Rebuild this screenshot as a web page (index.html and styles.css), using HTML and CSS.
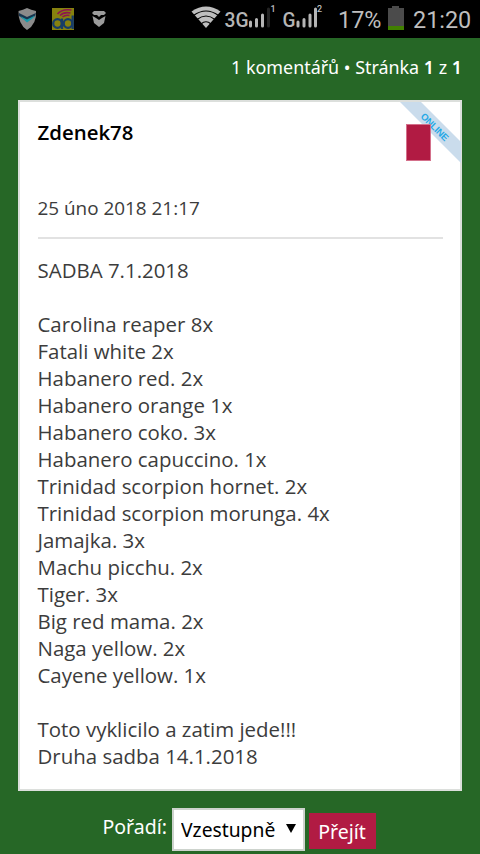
FILE: index.html
```
<!DOCTYPE html>
<html lang="cs">
<head>
  <meta charset="UTF-8">
  <meta name="viewport" content="width=device-width, initial-scale=1.0">
  <title>SADBA 7.1.2018</title>
  <link rel="stylesheet" href="styles.css">
</head>
<body>
  <div class="status-bar">
    <svg class="status-icons" width="330" height="38" viewBox="0 0 330 38">
      <!-- shield -->
      <path d="M18.500 11 Q23 10 27 8 Q31 10 36 11 Q37 24 27 30 Q18 24 18.500 11z" fill="#8b8b8b"/>
      <path d="M19 13 L27 17 L36 13 L35 16 L27 21 L19 16z" fill="#17344e"/>
      <path d="M20 16 L27 19.500 L35 15.500 L33 18 L27 22.500 L22 18z" fill="#169baa"/>
      <!-- ad -->
      <rect x="52" y="8" width="22" height="22" fill="#86810f"/>
      <g fill="none" stroke="#8d164e" stroke-width="1.600">
        <path d="M57.500 14 Q62 8.500 71.500 10"/>
        <path d="M60 15.500 Q64 11.500 70.500 13"/>
        <path d="M62.500 17 Q65.500 14.500 69.500 15.500"/>
      </g>
      <g fill="none" stroke="#173c68" stroke-width="2.300">
        <circle cx="57.500" cy="23.500" r="4.300"/>
        <path d="M62 18.500v10.500"/>
        <circle cx="68" cy="23.500" r="4.300"/>
        <path d="M72.700 15.500v13.500"/>
      </g>
      <!-- mask -->
      <path d="M92 13 L94 11 L104 11 L106 13 L104 15 L101 15 L99 17 L97 15 L94 15z" fill="#9b9b9b"/>
      <path d="M92.500 16 L96 18 L99 20 L102 18 L105.500 16 L104 23 L99 27 L94 23z" fill="#9b9b9b"/>
      <!-- wifi -->
      <path d="M206 28 L191.500 11.500 Q206 1.500 220.500 11.500z" fill="#bebebe"/>
      <g fill="none" stroke="#000" stroke-width="1.100">
        <path d="M193.500 15.500 Q206 6.500 218.500 15.500"/>
        <path d="M197 19.500 Q206 12.500 215 19.500"/>
        <path d="M201 24 Q206 19.500 211 24"/>
      </g>
      <!-- signal 1 -->
      <text class="net-text" x="224.500" y="27" textLength="24" lengthAdjust="spacingAndGlyphs">3G</text>
      <g stroke="#b5b5b5" stroke-width="3" stroke-linecap="round">
        <path d="M250.500 22v4M256.500 19.500v6.500M262.500 15v11"/>
        <path d="M268.500 9v17" stroke="#242424"/>
      </g>
      <text class="sim-text" x="270.500" y="12">1</text>
      <!-- signal 2 -->
      <text class="net-text" x="282.500" y="27" textLength="13" lengthAdjust="spacingAndGlyphs">G</text>
      <g stroke="#b5b5b5" stroke-width="3" stroke-linecap="round">
        <path d="M298 22v4M304 19.500v6.500M310 15v11M315.500 9v17"/>
      </g>
      <text class="sim-text" x="317" y="12">2</text>
    </svg>
    <span class="percent">17%</span>
    <svg class="battery" width="16" height="24" viewBox="0 0 16 24">
      <path d="M0 2h4V0h7v2h5v22H0z" fill="#4b4b4b"/>
      <path d="M0 20h16v4H0z" fill="#418000"/>
    </svg>
    <span class="clock">21:20</span>
  </div>

  <div class="pagination">1 komentářů • Stránka <strong>1</strong> z <strong>1</strong></div>

  <div class="post">
    <svg class="online" width="61" height="61" viewBox="0 0 61 61">
      <path d="M0 0h21l40 40v21z" fill="#cadcec"/>
      <text transform="translate(20 15) rotate(45)" textLength="35">ONLINE</text>
    </svg>
    <div class="flag"></div>
    <h3 class="author">Zdenek78</h3>
    <p class="date">25 úno 2018 21:17</p>
    <div class="content">
      SADBA 7.1.2018<br>
      <br>
      Carolina reaper 8x<br>
      Fatali white 2x<br>
      Habanero red. 2x<br>
      Habanero orange 1x<br>
      Habanero coko. 3x<br>
      Habanero capuccino. 1x<br>
      Trinidad scorpion hornet. 2x<br>
      Trinidad scorpion morunga. 4x<br>
      Jamajka. 3x<br>
      Machu picchu. 2x<br>
      Tiger. 3x<br>
      Big red mama. 2x<br>
      Naga yellow. 2x<br>
      Cayene yellow. 1x<br>
      <br>
      Toto vyklicilo a zatim jede!!!<br>
      Druha sadba 14.1.2018
    </div>
  </div>

  <form class="sort">
    <label for="order">Pořadí:</label>
    <div class="select-wrap">
      <select id="order">
        <option>Vzestupně</option>
        <option>Sestupně</option>
      </select>
      <svg class="arrow" width="10" height="9" viewBox="0 0 10 9"><path d="M0 0h10L5 9z"/></svg>
    </div>
    <button type="button">Přejít</button>
  </form>
</body>
</html>
```
FILE: styles.css
```
* {
  box-sizing: border-box;
}
body {
  margin: 0;
  height: 854px;
  overflow: hidden;
  background-color: #266726;
  color: #fff;
  font-family: "Open Sans", "Noto Sans", sans-serif;
}
.status-bar {
  display: flex;
  height: 38px;
  background-color: #000;
  color: #bebebe;
  font-family: Roboto, sans-serif;
  font-size: 23.4px;
  line-height: 40px;
}
.status-icons {
  flex: none;
}
.net-text {
  font: 500 21px Roboto, sans-serif;
  fill: #b5b5b5;
}
.sim-text {
  font: 500 9px Roboto, sans-serif;
  fill: #bebebe;
}
.percent {
  width: 58px;
  padding-left: 8px;
}
.battery {
  flex: none;
  margin-top: 6px;
}
.clock {
  margin-left: 9px;
}
.pagination {
  height: 62px;
  padding: 16px 18px 0 0;
  font-family: "Noto Sans", sans-serif;
  font-size: 17.9px;
  line-height: 27px;
  text-align: right;
}
.pagination strong {
  font-weight: 600;
}
.post {
  position: relative;
  height: 691px;
  margin: 0 18px;
  padding: 17px 17.5px 0;
  border: 2px solid #dcdfdc;
  background-color: #fff;
  color: #3c3c3c;
}
.online {
  position: absolute;
  top: 0;
  right: -1px;
}
.online text {
  font: bold 9.5px "Liberation Sans", sans-serif;
  fill: #27a9e6;
}
.flag {
  position: absolute;
  top: 22px;
  right: 29px;
  width: 25px;
  height: 37px;
  border: 1px solid #d4708b;
  background-color: #b11b43;
}
.author {
  margin: 0;
  color: #000;
  font-size: 20.4px;
  font-weight: 600;
  line-height: 26px;
}
.date {
  margin: 50px 0 18px;
  padding-bottom: 16px;
  border-bottom: 2px solid #e2e2e2;
  font-size: 18.9px;
  line-height: 26px;
}
.content {
  font-size: 20.46px;
  line-height: 27px;
}
.sort {
  display: flex;
  padding: 17px 0 0 102.5px;
  font-family: "Noto Sans", sans-serif;
  font-size: 19.5px;
}
.sort label {
  width: 69.5px;
  line-height: 38px;
}
.select-wrap {
  position: relative;
}
.sort select {
  display: block;
  appearance: none;
  width: 133px;
  height: 43px;
  padding: 0 7px;
  border: 2px solid #cdd3cd;
  border-radius: 0;
  background-color: #fff;
  color: #000;
  font: 19.3px "Noto Sans", sans-serif;
}
.arrow {
  position: absolute;
  top: 16px;
  right: 9px;
}
.sort button {
  width: 67px;
  height: 36px;
  margin: 5px 0 0 4px;
  padding: 0 1px 0 0;
  border: none;
  background-color: #b11b43;
  color: #fff;
  font: 19.5px "Noto Sans", sans-serif;
}
```
